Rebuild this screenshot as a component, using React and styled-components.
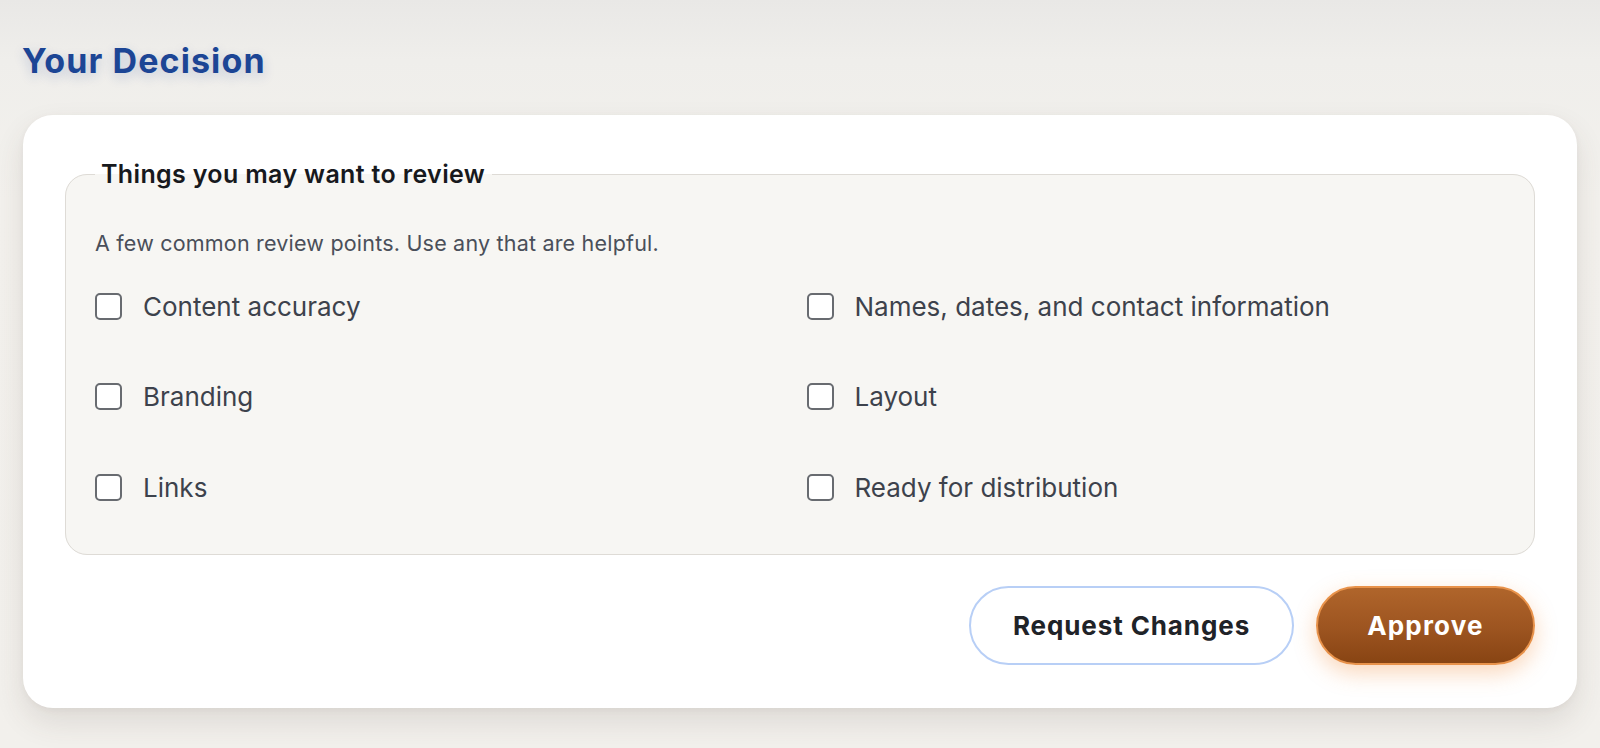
import React from "react";
import styled, { createGlobalStyle } from "styled-components";

const GlobalStyle = createGlobalStyle`
  html, body {
    margin: 0;
    padding: 0;
    height: 100%;
  }
  body {
    font-family: "Inter", "Noto Sans", sans-serif;
    background: linear-gradient(180deg, #e9e8e6 0px, #efeeeb 60px, #f3f1ed 200px, #f2f0ec 100%);
    min-height: 748px;
  }
`;

const Page = styled.div`
  padding: 39px 23px 40px 23px;
  display: flex;
  flex-direction: column;
`;

const Heading = styled.h2`
  margin: 0 0 32px -1px;
  font-size: 34px;
  font-weight: 700;
  letter-spacing: 1.1px;
  color: #1c4595;
  line-height: 44px;
  text-shadow: 0 4px 12px rgba(30, 68, 148, 0.22);
`;

const Card = styled.section`
  background: #ffffff;
  border-radius: 30px;
  padding: 44px 42px 43px 42px;
  box-shadow: 0 14px 30px rgba(70, 60, 50, 0.12), 0 2px 6px rgba(70, 60, 50, 0.05);
  display: flex;
  flex-direction: column;
`;

const Group = styled.fieldset`
  margin: 0;
  border: 1px solid #dedbd6;
  border-radius: 22px;
  background: #f7f6f3;
  padding: 39px 30px 47px 29px;
  min-width: 0;
`;

const Legend = styled.legend`
  padding: 0 7px 0 6px;
  font-size: 25px;
  font-weight: 600;
  letter-spacing: 0.35px;
  color: #17191d;
  line-height: 30px;
`;

const Hint = styled.p`
  margin: 0 0 28px 0;
  font-size: 21.5px;
  letter-spacing: 0.2px;
  line-height: 30px;
  color: #4a4f5a;
`;

const Grid = styled.div`
  display: grid;
  grid-template-columns: 1fr 1fr;
  column-gap: 14px;
  grid-auto-rows: 40px;
  row-gap: 50.5px;
`;

const Item = styled.label`
  display: flex;
  align-items: center;
  gap: 21px;
  font-size: 26px;
  color: #3d424c;
  cursor: pointer;
`;

const Box = styled.span`
  width: 23px;
  height: 23px;
  border: 2px solid #686b70;
  border-radius: 5px;
  background: #ffffff;
  flex-shrink: 0;
`;

const Actions = styled.div`
  display: flex;
  justify-content: flex-end;
  gap: 22px;
  margin-top: 31px;
`;

const Button = styled.button`
  height: 79px;
  border-radius: 40px;
  font-family: inherit;
  font-size: 26px;
  font-weight: 700;
  cursor: pointer;
  padding: 0;
  width: ${(p) => (p.$primary ? "219px" : "325px")};
  letter-spacing: ${(p) => (p.$primary ? "1.2px" : "0.9px")};
  color: ${(p) => (p.$primary ? "#ffffff" : "#1f2328")};
  border: 2px solid ${(p) => (p.$primary ? "#e8924a" : "#b8cff6")};
  background: ${(p) =>
    p.$primary ? "linear-gradient(180deg, #b0652b 0%, #9c5420 55%, #884413 100%)" : "#ffffff"};
  box-shadow: ${(p) => (p.$primary ? "0 8px 22px rgba(240, 140, 60, 0.35)" : "none")};
`;

const points = [
  "Content accuracy",
  "Names, dates, and contact information",
  "Branding",
  "Layout",
  "Links",
  "Ready for distribution",
];

export default function App() {
  return (
    <Page>
      <GlobalStyle />
      <Heading>Your Decision</Heading>
      <Card>
        <Group>
          <Legend>Things you may want to review</Legend>
          <Hint>A few common review points. Use any that are helpful.</Hint>
          <Grid>
            {points.map((p) => (
              <Item key={p}>
                <Box />
                {p}
              </Item>
            ))}
          </Grid>
        </Group>
        <Actions>
          <Button>Request Changes</Button>
          <Button $primary>Approve</Button>
        </Actions>
      </Card>
    </Page>
  );
}
